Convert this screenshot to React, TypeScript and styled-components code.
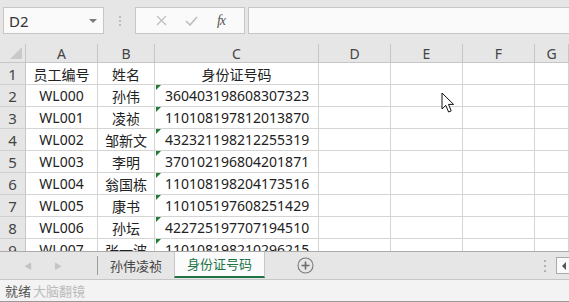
import React from "react";
import styled, { createGlobalStyle } from "styled-components";

const Global = createGlobalStyle`
  html, body { margin: 0; padding: 0; background: #ffffff; overflow: hidden; }
  * { box-sizing: border-box; }
`;

const FONT = `"Noto Sans", "Noto Sans CJK SC", sans-serif`;

const Page = styled.div`
  width: 569px;
  height: 302px;
  display: flex;
  flex-direction: column;
  font-family: ${FONT};
  position: relative;
  overflow: hidden;
`;

const Toolbar = styled.div`
  height: 44px;
  flex: none;
  background: #e6e6e6;
  display: flex;
  align-items: flex-start;
  padding: 7px 0 0 3px;
`;

const NameBox = styled.div`
  width: 101px;
  height: 27px;
  background: #fafafa;
  border: 1px solid #c6c6c6;
  display: flex;
  align-items: center;
  justify-content: space-between;
  padding: 0 6px 0 5px;
  font-size: 15px;
  color: #333;
`;

const Caret = styled.span`
  width: 0;
  height: 0;
  border-left: 4px solid transparent;
  border-right: 4px solid transparent;
  border-top: 4px solid #7a7a7a;
`;

const Grip = styled.div`
  width: 31px;
  height: 27px;
  display: flex;
  flex-direction: column;
  align-items: center;
  justify-content: center;
  gap: 2px;
  & > span { width: 2px; height: 2px; background: #bdbdbd; }
`;

const FxButtons = styled.div`
  width: 110px;
  height: 27px;
  background: #fafafa;
  border: 1px solid #c6c6c6;
  display: flex;
  align-items: center;
  padding-left: 10px;
`;

const FxBtn = styled.span<{ $w: number }>`
  width: ${(p) => p.$w}px;
  display: flex;
  justify-content: center;
`;

const FxLabel = styled.span`
  font-family: "Liberation Serif", serif;
  font-style: italic;
  font-size: 14px;
  color: #555;
  letter-spacing: -1px;
`;

const FormulaInput = styled.div`
  flex: 1;
  height: 27px;
  margin-left: 3px;
  margin-right: -2px;
  background: #fafafa;
  border: 1px solid #c6c6c6;
`;

const GridWrap = styled.div`
  height: 207px;
  flex: none;
  overflow: hidden;
  position: relative;
`;

const Grid = styled.div`
  display: grid;
  grid-template-columns: 26px 72px 57px 164px 72px 72px 72px 34px;
  grid-template-rows: 19px repeat(9, 22px);
`;

const Corner = styled.div`
  background: #e6e6e6;
  border-right: 1px solid #c6c6c6;
  border-bottom: 1px solid #c6c6c6;
  position: relative;
  &::after {
    content: "";
    position: absolute;
    right: 3px;
    bottom: 3px;
    width: 0;
    height: 0;
    border-left: 12px solid transparent;
    border-bottom: 12px solid #c9c9c9;
  }
`;

const ColHead = styled.div`
  background: #e6e6e6;
  border-right: 1px solid #c6c6c6;
  border-bottom: 1px solid #c6c6c6;
  display: flex;
  align-items: flex-end;
  justify-content: center;
  font-size: 14px;
  line-height: 17px;
  color: #444;
`;

const RowHead = styled.div`
  background: #e6e6e6;
  border-right: 1px solid #c6c6c6;
  border-bottom: 1px solid #d0d0d0;
  display: flex;
  align-items: flex-end;
  justify-content: center;
  font-size: 15px;
  line-height: 19px;
  color: #444;
`;

const Cell = styled.div<{ $align?: "center" | "left"; $flag?: boolean }>`
  background: #ffffff;
  border-right: 1px solid #d4d4d4;
  border-bottom: 1px solid #d4d4d4;
  display: flex;
  align-items: center;
  justify-content: ${(p) => (p.$align === "left" ? "flex-start" : "center")};
  padding-left: ${(p) => (p.$align === "left" ? "10px" : "0")};
  font-size: 14px;
  color: #222;
  white-space: nowrap;
  overflow: hidden;
  position: relative;
  &::before {
    content: "";
    display: ${(p) => (p.$flag ? "block" : "none")};
    position: absolute;
    left: 1px;
    top: 0;
    width: 0;
    height: 0;
    border-top: 5px solid #1e7b34;
    border-right: 5px solid transparent;
  }
`;

const Cursor = styled.svg`
  position: absolute;
  left: 441px;
  top: 92px;
`;

const TabBar = styled.div`
  height: 28px;
  flex: none;
  background: #e6e6e6;
  border-top: 1px solid #ababab;
  display: flex;
  align-items: stretch;
`;

const NavArea = styled.div`
  width: 98px;
  display: flex;
  align-items: center;
  padding-left: 24px;
  gap: 22px;
  color: #c4c4c4;
  font-size: 8px;
  position: relative;
  &::after {
    content: "";
    position: absolute;
    right: 0;
    top: 4px;
    bottom: 4px;
    width: 1px;
    background: #9e9e9e;
  }
`;

const Tab = styled.div<{ $active?: boolean }>`
  padding: 0 12px ${(p) => (p.$active ? "1px" : "0")};
  display: flex;
  align-items: center;
  font-size: 13px;
  color: ${(p) => (p.$active ? "#217346" : "#444")};
  background: ${(p) => (p.$active ? "#fbfbfb" : "transparent")};
  border-left: ${(p) => (p.$active ? "1px solid #c6c6c6" : "none")};
  border-right: ${(p) => (p.$active ? "1px solid #c6c6c6" : "none")};
  border-bottom: ${(p) => (p.$active ? "2px solid #217346" : "none")};
  margin-bottom: ${(p) => (p.$active ? "1px" : "0")};
`;

const AddArea = styled.div`
  flex: 1;
  display: flex;
  align-items: center;
  padding-left: 32px;
`;

const VDots = styled.div`
  width: 14px;
  display: flex;
  flex-direction: column;
  align-items: center;
  justify-content: center;
  gap: 3px;
  & > span { width: 2px; height: 2px; background: #b0b0b0; }
`;

const ScrollBtn = styled.div`
  width: 16px;
  height: 17px;
  margin: 5px -3px 0 4px;
  background: #fafafa;
  border: 1px solid #aaaaaa;
  display: flex;
  align-items: center;
  justify-content: center;
  &::before {
    content: "";
    width: 0;
    height: 0;
    border-top: 4px solid transparent;
    border-bottom: 4px solid transparent;
    border-right: 4px solid #555;
  }
`;

const StatusBar = styled.div`
  flex: 1;
  background: #f3f3f3;
  border-top: 1px solid #c6c6c6;
  border-bottom: 1px solid #9a9a9a;
  display: flex;
  align-items: center;
  padding-left: 5px;
  font-size: 13px;
  color: #555;
  gap: 2px;
`;

const Ghost = styled.span`
  color: #bbbbbb;
  font-size: 13px;
`;

const cols = ["A", "B", "C", "D", "E", "F", "G"];

const rows: [string, string, string][] = [
  ["员工编号", "姓名", "身份证号码"],
  ["WL000", "孙伟", "360403198608307323"],
  ["WL001", "凌祯", "110108197812013870"],
  ["WL002", "邹新文", "432321198212255319"],
  ["WL003", "李明", "370102196804201871"],
  ["WL004", "翁国栋", "110108198204173516"],
  ["WL005", "康书", "110105197608251429"],
  ["WL006", "孙坛", "422725197707194510"],
  ["WL007", "张一波", "110108198210296215"],
];

export default function App() {
  return (
    <Page>
      <Global />
      <Toolbar>
        <NameBox>
          <span>D2</span>
          <Caret />
        </NameBox>
        <Grip>
          <span />
          <span />
          <span />
        </Grip>
        <FxButtons>
          <FxBtn $w={30}>
            <svg width="11" height="11" viewBox="0 0 11 11">
              <path d="M1 1L10 10M10 1L1 10" stroke="#bdbdbd" strokeWidth="1.2" fill="none" />
            </svg>
          </FxBtn>
          <FxBtn $w={30}>
            <svg width="13" height="10" viewBox="0 0 13 10">
              <path d="M1 5L5 9L12 1" stroke="#bdbdbd" strokeWidth="1.6" fill="none" />
            </svg>
          </FxBtn>
          <FxBtn $w={30}>
            <FxLabel>fx</FxLabel>
          </FxBtn>
        </FxButtons>
        <FormulaInput />
      </Toolbar>
      <GridWrap>
        <Grid>
          <Corner />
          {cols.map((c) => (
            <ColHead key={c}>{c}</ColHead>
          ))}
          {rows.map((r, i) => (
            <React.Fragment key={i}>
              <RowHead>{i + 1}</RowHead>
              <Cell>{r[0]}</Cell>
              <Cell>{r[1]}</Cell>
              {i === 0 ? <Cell>{r[2]}</Cell> : <Cell $align="left" $flag>{r[2]}</Cell>}
              <Cell />
              <Cell />
              <Cell />
              <Cell />
            </React.Fragment>
          ))}
        </Grid>
      </GridWrap>
      <TabBar>
        <NavArea>
          <span>◀</span>
          <span>▶</span>
        </NavArea>
        <Tab>孙伟凌祯</Tab>
        <Tab $active>身份证号码</Tab>
        <AddArea>
          <svg width="17" height="17" viewBox="0 0 17 17">
            <circle cx="8.5" cy="8.5" r="7.5" stroke="#7a7a7a" strokeWidth="1.1" fill="none" />
            <path d="M8.5 4.5V12.5M4.5 8.5H12.5" stroke="#6a6a6a" strokeWidth="1.6" />
          </svg>
        </AddArea>
        <VDots>
          <span />
          <span />
          <span />
        </VDots>
        <ScrollBtn />
      </TabBar>
      <StatusBar>
        <span>就绪</span>
        <Ghost>大脑翻镜</Ghost>
      </StatusBar>
      <Cursor width="14" height="22" viewBox="0 0 14 22">
        <path
          d="M1 1V17L4.8 13.4L7.6 20L10.2 18.9L7.5 12.4H12.6Z"
          fill="#ffffff"
          stroke="#111"
          strokeWidth="1"
          strokeLinejoin="round"
        />
      </Cursor>
    </Page>
  );
}
